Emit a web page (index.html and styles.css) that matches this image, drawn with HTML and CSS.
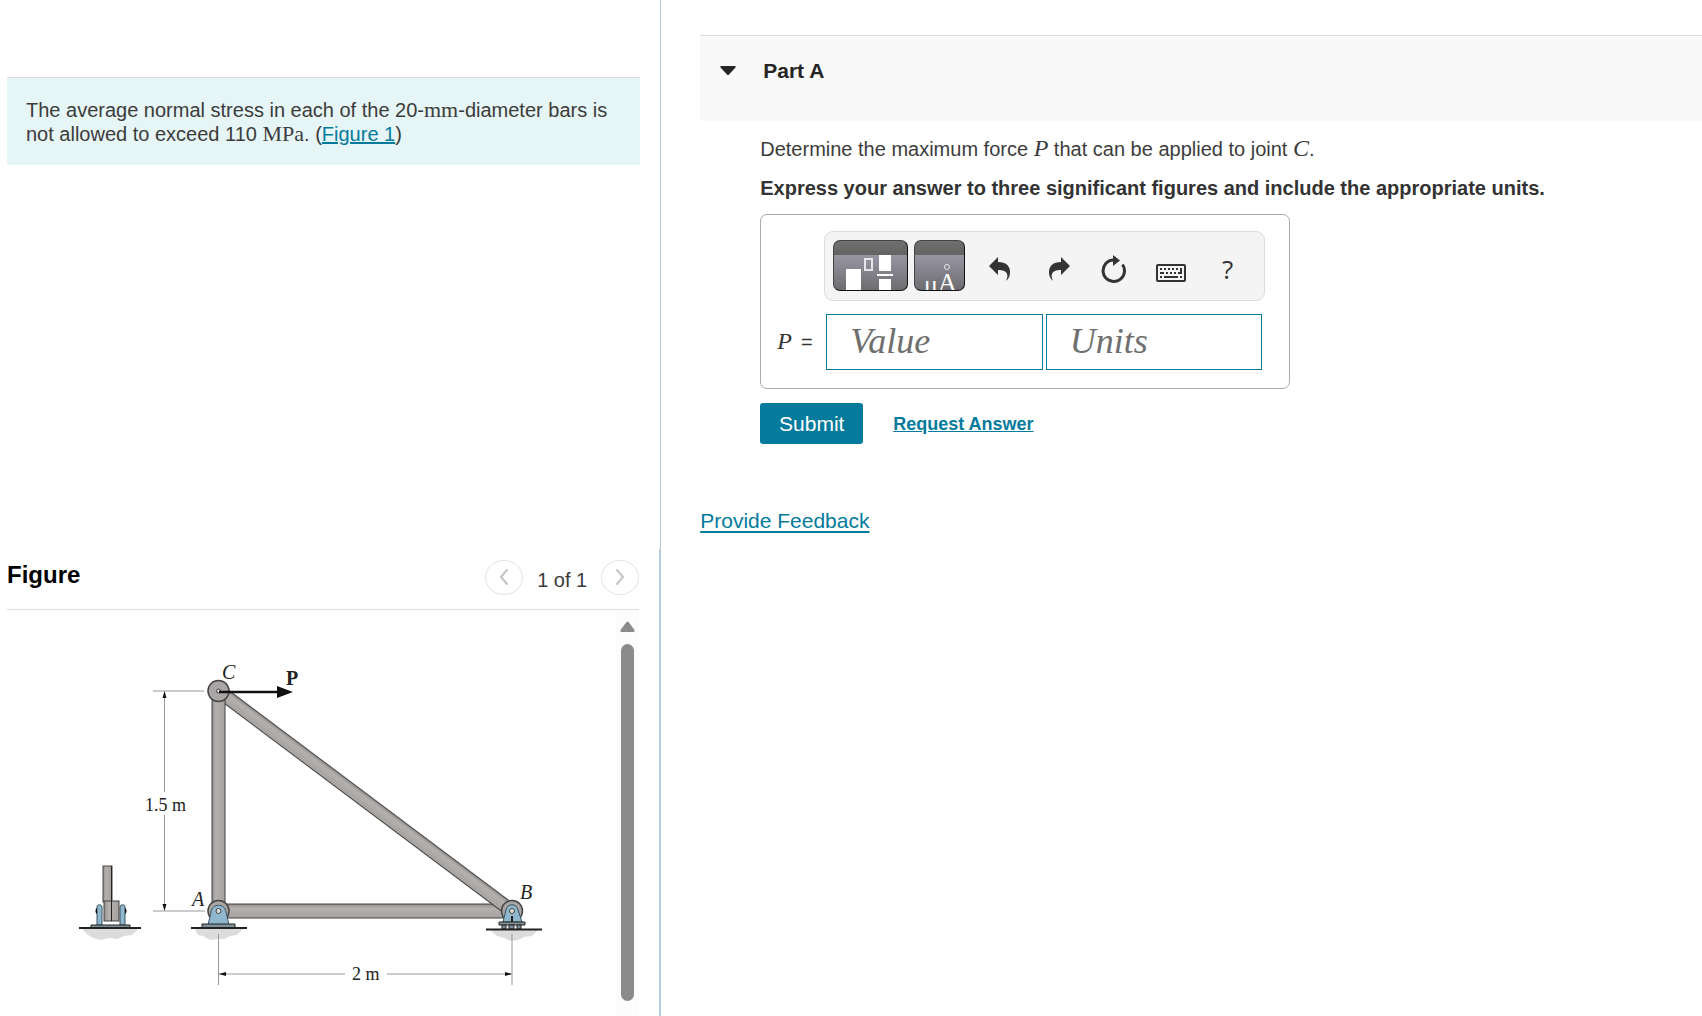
FILE: index.html
```html
<!DOCTYPE html>
<html lang="en">
<head>
	<meta charset="utf-8">
	<title>Part A</title>
	<link rel="stylesheet" href="styles.css">
</head>
<body>
	<div class="page">
		<aside class="sidebar">
			<section class="problem-pane">
				<div class="problem">
					The average normal stress in each of the 20-<span class="unit">mm</span>-diameter bars is not allowed to exceed 110 <span class="unit">MPa</span>. (<a href="#figure">Figure 1</a>)
				</div>
			</section>

			<section class="figure-pane" id="figure">
				<header class="figure-header">
					<h2>Figure</h2>
					<nav class="pager">
						<button type="button" class="pager-btn" aria-label="Previous">
							<svg width="12" height="18" viewBox="0 0 12 18"><path d="M9 2 3 9l6 7"/></svg>
						</button>
						<span class="pager-text">1 of 1</span>
						<button type="button" class="pager-btn" aria-label="Next">
							<svg width="12" height="18" viewBox="0 0 12 18"><path d="M3 2l6 7-6 7"/></svg>
						</button>
					</nav>
				</header>

				<div class="figure-body">
					<svg class="diagram" width="609" height="406" viewBox="7 610 609 406">
						<defs>
							<linearGradient id="bar-v" x1="0" x2="1" y1="0" y2="0">
								<stop offset="0" stop-color="#8f8c8b"/>
								<stop offset=".3" stop-color="#b4b0ae"/>
								<stop offset="1" stop-color="#a5a2a0"/>
							</linearGradient>
							<linearGradient id="bar-h" x1="0" x2="0" y1="0" y2="1">
								<stop offset="0" stop-color="#8f8c8b"/>
								<stop offset=".3" stop-color="#b4b0ae"/>
								<stop offset="1" stop-color="#a5a2a0"/>
							</linearGradient>
						</defs>

						<!-- ground -->
						<g class="soil">
							<path d="M82 929h56l-6 6-8 1-7 3-8-1-8 2-8-2-5-3z"/>
							<path d="M195 929h48l-6 6-7 1-6 3-7 0-7 1-7-4-5-1z"/>
							<path d="M490 930h48l-6 6-8 1-6 3-7 1-7-3-7-2z"/>
						</g>

						<!-- dimension lines -->
						<g class="dim">
							<path d="M153 691h51M153 911h52M164.500 692v100M164.500 815v95"/>
							<path d="M218.500 934v51M512 934v51M219 974h126M387 974h124"/>
						</g>
						<g class="tip">
							<path d="M164.500 691l-2 7h4zM164.500 911l-2-7h4zM219 974l7-2v4zM512 974l-7-2v4z"/>
						</g>

						<!-- bars -->
						<rect class="bar" fill="url(#bar-h)" x="224" y="904" width="282" height="14"/>
						<g transform="translate(218.700 691) rotate(36.870)">
							<rect class="bar" fill="url(#bar-h)" x="0" y="-6.500" width="366" height="13"/>
						</g>
						<rect class="bar" fill="url(#bar-v)" x="212" y="691" width="13" height="214"/>

						<!-- joint C -->
						<circle class="joint" cx="218.500" cy="691" r="10.500"/>
						<circle class="pin" cx="218.500" cy="691" r="2"/>
						<path class="force" d="M219 692h60"/>
						<path class="tip" d="M293 692l-16-6v12z"/>

						<!-- support A -->
						<circle class="joint" cx="218.500" cy="911" r="10.500"/>
						<path class="bracket" d="M208 925l3-13c1-9 14-9 15 0l3 13z"/>
						<circle class="pin" cx="218.500" cy="911" r="2.500"/>
						<path class="plate" d="M202 924h33v4h-33z"/>
						<path class="ground" d="M191 928h56"/>

						<!-- support B -->
						<circle class="joint" cx="512" cy="911" r="10.500"/>
						<path class="bracket" d="M503 922l3-12c1-7 11-7 12 0l4 12z"/>
						<circle class="pin" cx="512" cy="911" r="2.500"/>
						<path class="slot" d="M512 916v6"/>
						<path class="plate" d="M499 922h26v3h-26z"/>
						<path class="plate" d="M502 925h4v4h-4zM509 925h5v4h-5zM517 925h4v4h-4z"/>
						<path class="ground" d="M486 929.500h56"/>

						<!-- side view of the support -->
						<rect class="bar" fill="url(#bar-v)" x="103" y="866" width="9" height="36"/>
						<path class="bracket" d="M97 925v-18c0-3 5-3 5 0v18zM120 925v-18c0-3 5-3 5 0v18z"/>
						<path class="tip" d="M97 908v6c-2-1-2-5 0-6zM125 908v6c2-1 2-5 0-6z"/>
						<rect class="bar" fill="url(#bar-v)" x="104" y="901" width="15" height="20"/>
						<path class="seam" d="M111.500 866v55"/>
						<path class="plate" d="M91 925h39v3h-39z"/>
						<path class="ground" d="M79 928h62"/>

						<g class="letters">
							<text x="222" y="679" class="it">C</text>
							<text x="286" y="685" class="bold">P</text>
							<text x="192" y="906" class="it">A</text>
							<text x="520" y="899" class="it">B</text>
							<text x="145" y="811">1.5 m</text>
							<text x="352" y="980">2 m</text>
						</g>
					</svg>

					<div class="scrollbar">
						<svg class="scroll-arrow" width="15" height="11" viewBox="0 0 15 11"><path d="M6.500 1q1-1 2 0l6 8q.5 2-1 2h-12q-1.500 0-1-2z"/></svg>
						<div class="scroll-thumb"></div>
					</div>
				</div>
			</section>
		</aside>

		<main class="main">
			<header class="part-header">
				<svg width="16" height="10" viewBox="0 0 16 10"><path d="M1 0h14q1 .5.500 1.500L9 8.500q-1 1-2 0L.5 1.500Q0 .5 1 0z" fill="#252525"/></svg>
				<h1>Part A</h1>
			</header>

			<form class="part-body">
				<p>Determine the maximum force <i class="var">P</i> that can be applied to joint <i class="var">C</i>.</p>
				<p class="instructions">Express your answer to three significant figures and include the appropriate units.</p>

				<div class="answer">
					<div class="toolbar">
						<button type="button" class="tool-dark tool-wide" aria-label="Templates">
							<svg width="73" height="49" viewBox="0 0 73 49">
								<path fill="#fff" d="M12 28h15v21H12zM45 14h12v16H45zM45 38h12v11H45zM43 33h16v2H43z"/>
								<path fill="none" stroke="#e6e6e8" stroke-width="2" d="M31 18h7v11h-7z"/>
							</svg>
						</button>
						<button type="button" class="tool-dark" aria-label="Symbols">
							<svg width="49" height="49" viewBox="0 0 49 49">
								<text x="9" y="52" class="symbol">μ</text>
								<text x="23" y="50" class="symbol">A</text>
								<circle cx="32" cy="26" r="2.500" fill="none" stroke="#e6e6e8" stroke-width="1"/>
							</svg>
						</button>
						<button type="button" class="tool" aria-label="Undo">
							<svg width="22" height="26" viewBox="0 0 22 26"><path d="M0 10 9 1v5c8 0 12 4 12 10 0 4-1 6-4 9 1-3 2-5 1-7-1-3-4-4-9-4v5z"/></svg>
						</button>
						<button type="button" class="tool" aria-label="Redo">
							<svg width="26" height="26" viewBox="-4 0 26 26"><path d="M22 10 13 1v5C5 6 1 10 1 16c0 4 1 6 4 9-1-3-2-5-1-7 1-3 4-4 9-4v5z"/></svg>
						</button>
						<button type="button" class="tool" aria-label="Reset">
							<svg width="26" height="28" viewBox="0 0 26 28">
								<path d="M21.500 9.500A10.700 10.700 0 1 1 13 5" fill="none" stroke="#333" stroke-width="3"/>
								<path d="M12 0l7 5.500-7 5.500z"/>
							</svg>
						</button>
						<button type="button" class="tool" aria-label="Keyboard shortcuts">
							<svg class="keyboard" width="30" height="18" viewBox="0 0 30 18">
								<rect x="1" y="1" width="28" height="16" rx="1" fill="none" stroke="#333" stroke-width="2"/>
								<path d="M4 4h2v2H4zM8 4h2v2H8zM12 4h2v2h-2zM16 4h2v2h-2zM20 4h2v2h-2zM4 8h4v2H4zM10 8h2v2h-2zM14 8h2v2h-2zM18 8h2v2h-2zM24 4h2v6h-4V8h2zM4 12h2v2H4zM8 12h14v2H8zM24 12h2v2h-2z"/>
							</svg>
						</button>
						<button type="button" class="tool tool-help" aria-label="Help">?</button>
					</div>

					<label for="value"><i class="var">P</i><span>=</span></label>
					<div class="fields">
						<input type="text" id="value" name="value" placeholder="Value">
						<input type="text" name="units" placeholder="Units" aria-label="Units">
					</div>
				</div>

				<div class="actions">
					<button type="submit" class="submit">Submit</button>
					<a href="#" class="request">Request Answer</a>
				</div>
			</form>

			<a href="#" class="feedback">Provide Feedback</a>
		</main>
	</div>
</body>
</html>
```
FILE: styles.css
```css
* {
	box-sizing: border-box;
}

body {
	margin: 0;
	background-color: #fff;
	font-family: "Liberation Sans", Arial, sans-serif;
	font-size: 20px;
	line-height: 24px;
	color: #3c3c3c;
}

h1,
h2,
p {
	margin: 0;
}

a {
	color: #047a9c;
}

button {
	font-family: inherit;
	padding: 0;
	cursor: pointer;
}

.page {
	display: grid;
	grid-template-columns: 38.85% 1fr;
	min-height: 100vh;
}

.unit,
.var {
	font-family: "Liberation Serif", "Times New Roman", serif;
	font-size: 24px;
	line-height: 20px;
}

.unit {
	font-size: 22px;
}

/* left column */
.sidebar {
	display: flex;
	flex-direction: column;
}

.problem-pane {
	height: 54vh;
	padding: 77px 20px 0 7px;
	border-right: 1px solid #b6cbde;
}

.problem {
	padding: 20px 19px 19px;
	border-top: 1px solid #d5dcdc;
	background-color: #e6f5f6;
}

.figure-pane {
	flex: 1;
	display: flex;
	flex-direction: column;
	padding: 0 20px 0 7px;
	border-right: 2px solid #b6cbde;
}

.figure-header {
	display: flex;
	justify-content: space-between;
	height: 61px;
	padding-top: 11px;
	border-bottom: 1px solid #dcdcdc;
}

.figure-header h2 {
	padding-top: 3px;
	font-size: 24px;
	color: #000;
}

.pager {
	display: flex;
	gap: 14px;
}

.pager-btn {
	display: flex;
	align-items: center;
	justify-content: center;
	width: 38px;
	height: 35px;
	border: 1px solid #e4e4e4;
	border-radius: 50%;
	background-color: #fff;
}

.pager-btn path {
	fill: none;
	stroke: #c3c3c3;
	stroke-width: 2;
	stroke-linecap: round;
}

.pager-text {
	padding-top: 8px;
}

.figure-body {
	flex: 1;
	display: flex;
	justify-content: space-between;
}

.scrollbar {
	display: flex;
	flex-direction: column;
	align-items: center;
	width: 23px;
	padding: 11px 0 15px;
	background-color: #fcfcfc;
}

.scroll-arrow {
	fill: #8b8b8b;
}

.scroll-thumb {
	flex: 1;
	width: 13px;
	margin-top: 12px;
	border-radius: 7px;
	background-color: #8b8b8b;
}

/* truss drawing */
.diagram {
	min-width: 0;
}

.soil {
	fill: #dcdcdc;
}

.dim {
	fill: none;
	stroke: #999;
	stroke-width: 1;
}

.tip {
	fill: #111;
}

.bar {
	stroke: #444;
	stroke-width: 1;
}

.joint {
	fill: #aaa6a5;
	stroke: #444;
	stroke-width: 1.5;
}

.pin {
	fill: #ddd;
	stroke: #444;
	stroke-width: 1;
}

.force {
	stroke: #111;
	stroke-width: 2.5;
}

.bracket {
	fill: #8fb7cd;
	stroke: #38525f;
	stroke-width: 1;
}

.plate {
	fill: #7f929c;
	stroke: #222;
	stroke-width: 1;
}

.ground,
.slot {
	stroke: #222;
	stroke-width: 2;
}

.seam {
	stroke: #222;
	stroke-width: 1;
}

.letters {
	font-family: "Liberation Serif", "Times New Roman", serif;
	font-size: 18px;
	fill: #222;
}

.letters .it {
	font-size: 20px;
	font-style: italic;
}

.letters .bold {
	font-size: 20px;
	font-weight: bold;
}

/* right column */
.main {
	padding: 35px 0 0 39px;
}

.part-header {
	display: flex;
	gap: 27px;
	height: 86px;
	padding: 23px 20px 0;
	border-top: 1px solid #dcdcdc;
	background-color: #f9f9f9;
}

.part-header svg {
	margin-top: 7px;
}

.part-header h1 {
	font-size: 21px;
	color: #252525;
}

.part-body {
	padding: 16px 20px 0 60px;
}

.instructions {
	margin-top: 15px;
	font-weight: bold;
	color: #333;
}

.answer {
	display: grid;
	grid-template-columns: 47px 1fr;
	row-gap: 13px;
	align-items: center;
	max-width: 530px;
	margin-top: 14px;
	padding: 16px 24px 18px 16px;
	border: 1px solid #aaa;
	border-radius: 7px;
}

.toolbar {
	grid-column: 2;
	display: flex;
	align-items: center;
	height: 70px;
	padding: 0 0 2px 8px;
	border: 1px solid #dcdcdc;
	border-radius: 9px;
	background-color: #f4f4f4;
}

.tool-dark {
	display: flex;
	width: 51px;
	height: 51px;
	margin-right: 6px;
	border: 1px solid #111;
	border-top-color: #444;
	border-left-color: #444;
	border-radius: 7px;
	overflow: hidden;
	background: linear-gradient(#6f6f6f, #636363 14px, #9895a3 14px, #6d6d70);
}

.tool-wide {
	width: 75px;
}

.symbol {
	font-family: "Liberation Serif", "Times New Roman", serif;
	font-size: 26px;
	fill: #fff;
}

.tool {
	display: flex;
	align-items: center;
	justify-content: center;
	width: 57px;
	height: 51px;
	padding-top: 8px;
	border: none;
	background: none;
	color: #333;
	fill: #333;
}

.tool .keyboard {
	margin-top: 8px;
}

.tool-help {
	font-family: "Open Sans", sans-serif;
	font-size: 26px;
}

.answer label {
	display: flex;
	align-items: baseline;
	gap: 9px;
	color: #333;
}

.fields {
	display: grid;
	grid-template-columns: 1fr 1fr;
	gap: 3px;
	padding: 0 3px 0 2px;
}

.fields input {
	width: 100%;
	height: 56px;
	padding: 0 23px 2px;
	border: 1px solid #047a9c;
	font-family: "Liberation Serif", "Times New Roman", serif;
	font-size: 36px;
	font-style: italic;
}

.fields input::placeholder {
	color: #6f6f6f;
}

.actions {
	display: flex;
	align-items: center;
	gap: 30px;
	margin-top: 14px;
}

.submit {
	width: 103px;
	height: 41px;
	border: none;
	border-radius: 3px;
	background-color: #047a9c;
	font-size: 21px;
	color: #fff;
}

.request {
	font-size: 18px;
	font-weight: bold;
}

.feedback {
	display: inline-block;
	margin-top: 65px;
	font-size: 21px;
	text-underline-offset: 3px;
}
```
